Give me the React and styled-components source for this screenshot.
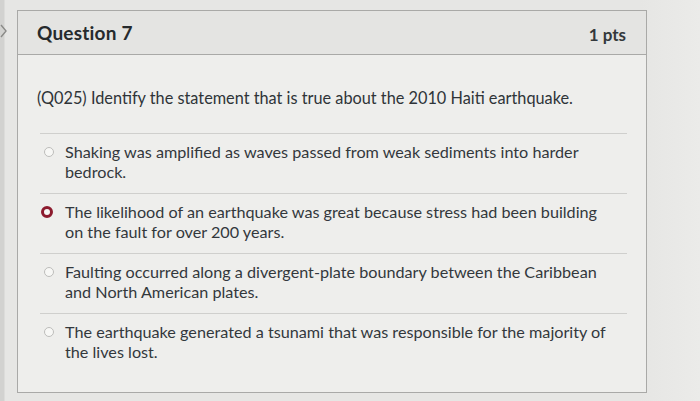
import React from "react";
import styled, { createGlobalStyle } from "styled-components";

const Global = createGlobalStyle`
  html, body { margin: 0; padding: 0; }
  body {
    width: 700px; height: 401px; overflow: hidden;
    background: #e3e3e1;
    font-family: Lato, "Open Sans", sans-serif;
    color: #2f3438;
  }
`;

const Page = styled.div`
  position: relative;
  width: 700px;
  height: 401px;
  padding: 10px 53px 0 17px;
  box-sizing: border-box;
  background: linear-gradient(90deg, #d2d2d0 0, #d2d2d0 4px, #e6e6e4 5px, #e6e6e4 640px, #ebebe9 700px);
`;

const Chevron = styled.svg`
  position: absolute;
  left: 0;
  top: 24px;
`;

const Card = styled.section`
  border: 1px solid #a9a9a7;
  background: #eeeeec;
  height: 383px;
  box-sizing: border-box;
  display: flex;
  flex-direction: column;
`;

const Header = styled.header`
  display: flex;
  align-items: center;
  justify-content: space-between;
  height: 43px;
  padding: 0 20px 0 19px;
  background: #e4e4e2;
  border-bottom: 1px solid #a9a9a7;
`;

const Title = styled.h2`
  margin: 0;
  font-size: 19px;
  font-weight: 700;
  color: #262a2d;
  letter-spacing: 0.2px;
`;

const Points = styled.span`
  font-size: 17px;
  font-weight: 700;
  color: #33383c;
  margin-top: 4px;
`;

const Body = styled.div`
  padding: 33px 18px 0 19px;
`;

const Prompt = styled.p`
  margin: 0 0 25px 0;
  font-size: 16.3px;
  line-height: 20px;
  color: #2f3438;
`;

const Answers = styled.div`
  margin-left: 3px;
  width: 587px;
`;

const Answer = styled.div`
  display: flex;
  align-items: flex-start;
  border-top: 1px solid #cfcfcd;
  padding: 8px 0 11px 0;
`;

const Radio = styled.span`
  flex: none;
  box-sizing: border-box;
  width: ${p => (p.$checked ? 12 : 10)}px;
  height: ${p => (p.$checked ? 12 : 10)}px;
  margin-top: ${p => (p.$checked ? 4 : 5)}px;
  margin-left: ${p => (p.$checked ? 1 : 4)}px;
  margin-right: ${p => (p.$checked ? 12 : 11)}px;
  border-radius: 50%;
  background: #f7f7f5;
  border: ${p => (p.$checked ? "3.5px solid #8c1b2e" : "1px solid #bdbdbb")};
`;

const Label = styled.div`
  font-size: 16.2px;
  line-height: 20px;
  color: #33383c;
`;

const Line = styled.span`
  display: block;
  white-space: nowrap;
`;

const options = [
  ["Shaking was amplified as waves passed from weak sediments into harder", "bedrock."],
  ["The likelihood of an earthquake was great because stress had been building", "on the fault for over 200 years."],
  ["Faulting occurred along a divergent-plate boundary between the Caribbean", "and North American plates."],
  ["The earthquake generated a tsunami that was responsible for the majority of", "the lives lost."],
];

export default function App() {
  return (
    <Page>
      <Global />
      <Chevron width="8" height="14" viewBox="0 0 8 14">
        <path d="M1 1 L6 7 L1 13" fill="none" stroke="#8a8a88" strokeWidth="1.4" />
      </Chevron>
      <Card>
        <Header>
          <Title>Question 7</Title>
          <Points>1 pts</Points>
        </Header>
        <Body>
          <Prompt>(Q025) Identify the statement that is true about the 2010 Haiti earthquake.</Prompt>
          <Answers>
            {options.map((o, i) => (
              <Answer key={i}>
                <Radio $checked={i === 1} />
                <Label>
                  {o.map((l, j) => (
                    <Line key={j}>{l}</Line>
                  ))}
                </Label>
              </Answer>
            ))}
          </Answers>
        </Body>
      </Card>
    </Page>
  );
}
